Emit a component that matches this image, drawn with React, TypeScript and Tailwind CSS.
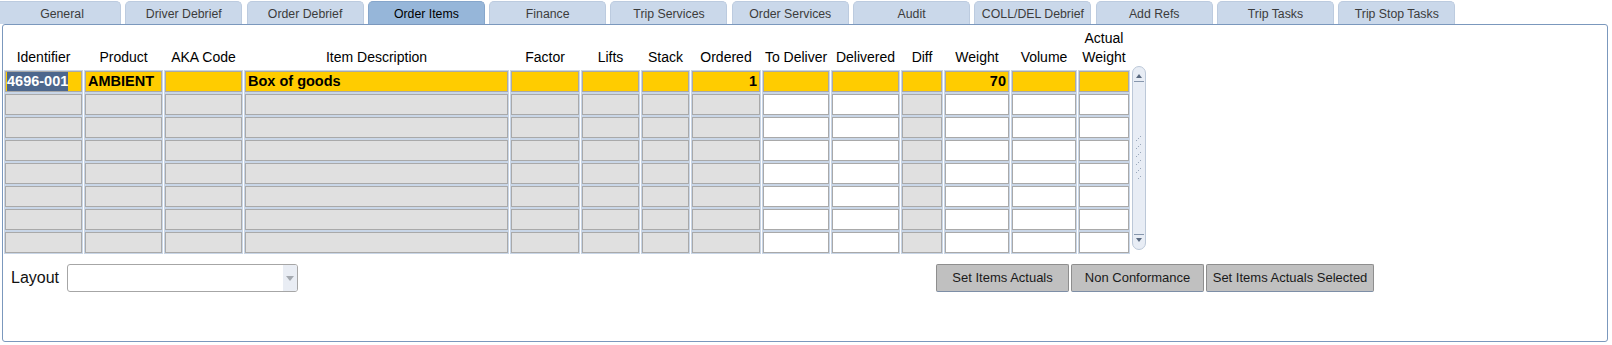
import React from "react";

const tabs = [
  "General",
  "Driver Debrief",
  "Order Debrief",
  "Order Items",
  "Finance",
  "Trip Services",
  "Order Services",
  "Audit",
  "COLL/DEL Debrief",
  "Add Refs",
  "Trip Tasks",
  "Trip Stop Tasks",
];

const columns = [
  { label: "Identifier", w: 77 },
  { label: "Product", w: 77 },
  { label: "AKA Code", w: 77 },
  { label: "Item Description", w: 263 },
  { label: "Factor", w: 68 },
  { label: "Lifts", w: 57 },
  { label: "Stack", w: 47 },
  { label: "Ordered", w: 68, right: true },
  { label: "To Deliver", w: 66, editable: true },
  { label: "Delivered", w: 67, editable: true },
  { label: "Diff", w: 40 },
  { label: "Weight", w: 64, right: true, editable: true },
  { label: "Volume", w: 64, editable: true },
  { label: "Actual|Weight", w: 50, editable: true },
];

const firstRow = ["4696-001", "AMBIENT", "", "Box of goods", "", "", "", "1", "", "", "", "70", "", ""];

function Tab({ label, index }: { label: string; index: number }) {
  const active = label === "Order Items";
  return (
    <div
      className={
        "flex h-[23px] items-center justify-center rounded-t-[5px] border border-b-0 pt-[3px] text-[12.3px] " +
        (index === 0 ? "w-[121px] pl-[4px] rounded-tl-none border-l-0 " : "w-[117px] ") +
        (active
          ? "border-[#86a6cb] bg-[#96b6d9] text-black"
          : "border-[#bccbdf] bg-[#cad8ea] text-[#3c3c3c]")
      }
    >
      {label}
    </div>
  );
}

function Cell({ col, value, row }: { col: (typeof columns)[number]; value: string; row: number }) {
  const bg = row === 0 ? "bg-[#ffcc00]" : col.editable ? "bg-white" : "bg-[#e0e0e0]";
  const isId = row === 0 && col.label === "Identifier";
  return (
    <div
      style={{ width: col.w }}
      className={
        "flex h-[21px] shrink-0 items-center overflow-hidden border border-[#a9a9a9] text-[14.5px] font-bold leading-[19px] text-black shadow-[0_0_0_1px_#c9d6e7] " +
        bg +
        (col.right ? " justify-end pr-[2px]" : isId ? " pl-[1px]" : " pl-[2px]")
      }
    >
      {isId ? <span className="bg-[#4d678d] text-white">{value}</span> : value}
    </div>
  );
}

function Scrollbar() {
  return (
    <div className="-mt-[5px] ml-[3px] flex h-[184px] w-[14px] flex-col items-center rounded-[7px] border border-[#bcc8d8] bg-[#e8edf5]">
      <svg width="8" height="6" className="mt-[6px]">
        <path d="M1 5 L4 1 L7 5 Z" fill="#5a6a80" />
      </svg>
      <div className="mt-[2px] h-px w-[10px] bg-[#8797ad]" />
      <div className="flex flex-1 items-center">
        <svg width="8" height="44" viewBox="0 0 8 44">
          {[0, 8, 16, 24, 32, 40].map((y) => (
            <g key={y} fill="#9aa8bb">
              <rect x="5" y={y} width="1" height="1" />
              <rect x="3" y={y + 2} width="1" height="1" />
              <rect x="1" y={y + 4} width="1" height="1" />
            </g>
          ))}
        </svg>
      </div>
      <div className="mb-[2px] h-px w-[10px] bg-[#8797ad]" />
      <svg width="8" height="6" className="mb-[6px]">
        <path d="M1 1 L7 1 L4 5 Z" fill="#5a6a80" />
      </svg>
    </div>
  );
}

export default function App() {
  return (
    <div className="h-[345px] w-[1612px] overflow-hidden bg-white font-['Liberation_Sans',Arial,sans-serif]">
      <div className="flex h-[24px] items-end gap-[4.3px]">
        {tabs.map((t, i) => (
          <Tab key={t} label={t} index={i} />
        ))}
      </div>

      <div className="ml-[2px] flex h-[318px] w-[1606px] flex-col rounded-[3px] border border-[#7b98bd] pl-[2px]">
        <div className="flex h-[42px] items-end gap-[3px] text-[14px] leading-[19px] text-black">
          {columns.map((c) => (
            <div key={c.label} style={{ width: c.w }} className="flex shrink-0 flex-col items-center whitespace-nowrap">
              {c.label.split("|").map((l) => (
                <span key={l}>{l}</span>
              ))}
            </div>
          ))}
        </div>

        <div className="mt-[4px] flex items-start">
          <div className="flex flex-col gap-[2px]">
            {Array.from({ length: 8 }).map((_, r) => (
              <div key={r} className="flex gap-[3px]">
                {columns.map((c, ci) => (
                  <Cell key={c.label} col={c} row={r} value={r === 0 ? firstRow[ci] : ""} />
                ))}
              </div>
            ))}
          </div>
          <Scrollbar />
        </div>

        <div className="mt-[11px] flex items-center">
          <span className="ml-[6px] text-[16px] leading-[20px] text-[#111]">Layout</span>
          <div className="ml-[8px] flex h-[28px] w-[231px] items-stretch justify-end overflow-hidden rounded-[3px] border border-[#a6a6a6] bg-white">
            <div className="flex w-[14px] items-center justify-center bg-[#e9edf4]">
              <svg width="8" height="5">
                <path d="M0 0 L8 0 L4 5 Z" fill="#a4a9b0" />
              </svg>
            </div>
          </div>
          <div className="ml-[638px] flex gap-[2px] text-[13px] text-[#1a1a1a]">
            {[
              ["Set Items Actuals", 133],
              ["Non Conformance", 133],
              ["Set Items Actuals Selected", 168],
            ].map(([label, w]) => (
              <button
                key={label as string}
                style={{ width: w as number }}
                className="flex h-[28px] items-center justify-center rounded-[2px] border border-[#8e8e8e] border-b-[#7d8ea6] bg-[#c0c0c0]"
              >
                {label}
              </button>
            ))}
          </div>
        </div>
      </div>
    </div>
  );
}
